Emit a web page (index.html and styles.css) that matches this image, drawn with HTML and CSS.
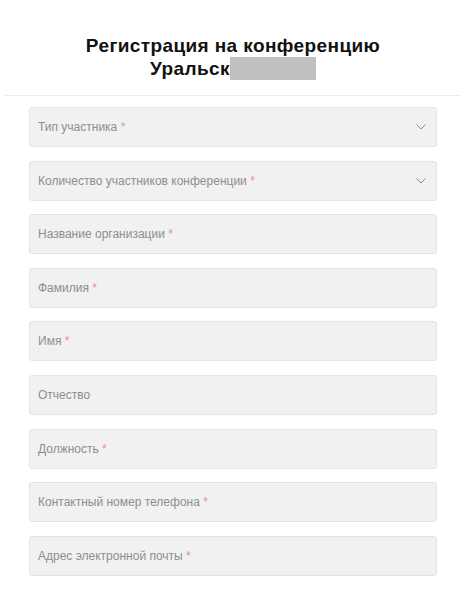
FILE: index.html
```html
<!DOCTYPE html>
<html lang="ru">
<head>
    <meta charset="UTF-8">
    <meta name="viewport" content="width=device-width, initial-scale=1.0">
    <title>Регистрация на конференцию</title>
    <link rel="stylesheet" href="styles.css">
</head>
<body>

    <div class="header">
        <h1 class="title">Регистрация на конференцию<br>Уральск<span class="hidden-part"></span></h1>
    </div>

    <form class="reg-form">
        <div class="field select">
            <span class="label">Тип участника <i>*</i></span>
            <svg class="chevron" width="10" height="6" viewBox="0 0 10 6"><path d="M0.5 0.5 L5 5 L9.5 0.5" fill="none" stroke="#888" stroke-width="1"/></svg>
        </div>
        <div class="field select">
            <span class="label">Количество участников конференции <i>*</i></span>
            <svg class="chevron" width="10" height="6" viewBox="0 0 10 6"><path d="M0.5 0.5 L5 5 L9.5 0.5" fill="none" stroke="#888" stroke-width="1"/></svg>
        </div>
        <div class="field"><span class="label">Название организации <i>*</i></span></div>
        <div class="field"><span class="label">Фамилия <i>*</i></span></div>
        <div class="field"><span class="label">Имя <i>*</i></span></div>
        <div class="field"><span class="label">Отчество</span></div>
        <div class="field"><span class="label">Должность <i>*</i></span></div>
        <div class="field"><span class="label">Контактный номер телефона <i>*</i></span></div>
        <div class="field"><span class="label">Адрес электронной почты <i>*</i></span></div>
    </form>

</body>
</html>
```

FILE: styles.css
```css
body, html { margin: 0; padding: 0; background: #fff; font-family: 'Liberation Sans', Arial, sans-serif; overflow: hidden; }
.header { margin: 0 5px; padding: 34px 0 15px; border-bottom: 1px solid #ececec; text-align: center; }
.title { margin: 0; font-size: 19px; line-height: 23px; font-weight: bold; color: #111; letter-spacing: 0.4px; }
.hidden-part { display: inline-block; width: 86px; height: 23px; background: #c0c0c0; vertical-align: -5px; }
.reg-form { display: flex; flex-direction: column; gap: 13.6px; padding: 11px 29px 0; }
.field { display: flex; align-items: center; justify-content: space-between; height: 38px; padding: 0 8px; background: #f1f1f1; border: 1px solid #e4e4e4; border-radius: 3px; }
.label { font-size: 12px; color: #8e8e8e; }
.label i { font-style: normal; color: #e39090; }
.chevron { margin-right: 2px; }
```
